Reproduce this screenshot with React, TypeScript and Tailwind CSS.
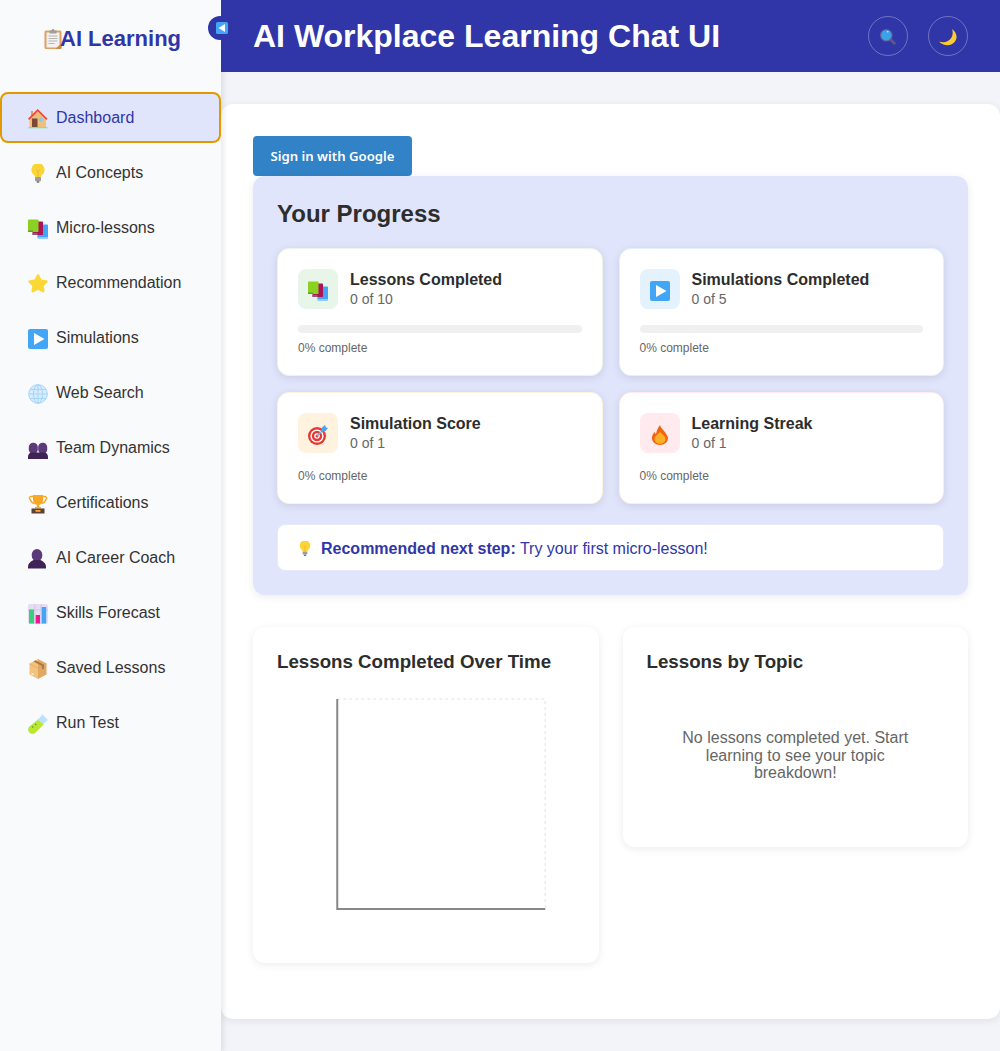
import React from "react";

type IconProps = { className?: string };

const Clipboard = ({ className }: IconProps) => (
  <svg viewBox="0 0 18 20" className={className}>
    <rect x="0.5" y="1.5" width="17" height="18.5" rx="1.5" fill="#e0a060" />
    <rect x="2.5" y="3.5" width="13" height="15" fill="#f3f2f0" />
    <path d="M4.5 7h9M4.5 9.5h9M4.5 12h9M4.5 14.5h6" stroke="#b5b5b5" strokeWidth="1" />
    <path d="M5.5 1.5h2l.8-1.5h1.4l.8 1.5h2v3h-7z" fill="#9e9e9e" />
    <path d="M11.5 20l6-6v4.5a1.5 1.5 0 0 1-1.5 1.5z" fill="#c98a4c" />
  </svg>
);
const House = ({ className }: IconProps) => (
  <svg viewBox="0 0 20 20" className={className}>
    <rect x="3" y="2" width="2" height="5" fill="#d9a066" />
    <path d="M1.500 10L9.700 1.500 18 10v8H1.500z" fill="#eec07c" />
    <path d="M0.600 10.300L9.700 1.200l9.300 9.100" fill="none" stroke="#f44336" strokeWidth="1.700" />
    <rect x="4" y="9.500" width="5.500" height="8.500" fill="#7a4a34" />
    <circle cx="13" cy="10.500" r="2.200" fill="#90c8ea" />
    <rect x="0.500" y="18" width="19" height="1.300" fill="#7fe59a" />
  </svg>
);
const Bulb = ({ className }: IconProps) => (
  <svg viewBox="0 1 20 20" className={className}>
    <path d="M10 0a6.700 6.700 0 0 0-4.200 11.800c.8.700 1.200 1.500 1.200 2.200h6c0-.7.400-1.500 1.200-2.200A6.700 6.700 0 0 0 10 0z" fill="#fbd535" />
    <path d="M8.500 6.500L10 9l1.500-2.500M10 9v5" stroke="#f4a836" strokeWidth="0.700" fill="none" />
    <rect x="7" y="14" width="6" height="4" rx="0.600" fill="#9e9e9e" />
    <rect x="8.500" y="18" width="3" height="1.800" rx="0.800" fill="#757575" />
  </svg>
);
const Books = ({ className }: IconProps) => (
  <svg viewBox="0 0 20 20" className={className}>
    <rect x="9.500" y="5.500" width="10.500" height="14" rx="0.800" fill="#42a5f5" />
    <rect x="10" y="18" width="10" height="1.500" fill="#90caf9" />
    <rect x="4.500" y="2.500" width="10.500" height="13.500" rx="0.800" fill="#ad1457" />
    <rect x="4.500" y="14" width="5" height="2" fill="#8e5a80" />
    <rect x="0" y="0.500" width="10.500" height="12.500" rx="0.800" fill="#8bd122" />
    <rect x="0" y="11.500" width="5" height="1.500" fill="#5f9f2a" />
  </svg>
);
const Star = ({ className }: IconProps) => (
  <svg viewBox="0 0 20 20" className={className}>
    <path d="M10 .3c.6 0 1 .4 1.300 1l2.100 4.300 4.800.7c1.400.2 1.900 1.400 1 2.300l-3.500 3.400.8 4.800c.2 1.300-.9 2-2 1.400L10 15.800l-4.500 2.400c-1.100.6-2.200-.1-2-1.400l.8-4.800L.8 8.600c-.9-.9-.4-2.100 1-2.300l4.800-.7 2.100-4.300c.3-.6.7-1 1.300-1z" fill="#fdd835" />
  </svg>
);
const Play = ({ className }: IconProps) => (
  <svg viewBox="0 0 20 20" className={className}>
    <rect width="20" height="20" rx="2" fill="#42a5f5" />
    <path d="M6 4l10.500 6L6 16z" fill="#fff" />
  </svg>
);
const Globe = ({ className }: IconProps) => (
  <svg viewBox="0 0 20 20" className={className}>
    <circle cx="10" cy="10" r="9.500" fill="#d8ecfd" />
    <g fill="none" stroke="#a5d5fb" strokeWidth="1">
      <circle cx="10" cy="10" r="9.300" />
      <ellipse cx="10" cy="10" rx="4.500" ry="9.300" />
      <path d="M10 .7v18.600M.7 10h18.600M2 5.500h16M2 14.500h16" />
    </g>
  </svg>
);
const Team = ({ className }: IconProps) => (
  <svg viewBox="0 0 20 20" className={className}>
    <rect x="0.800" y="3.800" width="9" height="11" rx="4.300" fill="#5a3a78" />
    <rect x="10.200" y="3.800" width="9" height="11" rx="4.300" fill="#5a3a78" />
    <path d="M0 20v-2C0 15.500 1.500 13.500 4 13.500h12c2.500 0 4 2 4 4.500v2z" fill="#3f2356" />
  </svg>
);
const Trophy = ({ className }: IconProps) => (
  <svg viewBox="0 0 20 20" className={className}>
    <path d="M5 2.500H3a1.800 1.800 0 0 0-.6 3.400C3.200 8 4 9 6.500 9.500M15 2.500h2a1.800 1.800 0 0 1 .6 3.400C16.800 8 16 9 13.500 9.500" fill="none" stroke="#f9a825" strokeWidth="1.500" />
    <path d="M5 1h10v4.500c0 3.300-2.200 5.500-5 5.500S5 8.800 5 5.500z" fill="#f9a825" />
    <rect x="8.800" y="10" width="2.400" height="4" fill="#f9a825" />
    <rect x="7" y="13" width="6" height="1.500" fill="#f9a825" />
    <rect x="3.500" y="14.500" width="13" height="5" fill="#5d4037" />
    <rect x="7.500" y="16" width="5" height="1.800" fill="#f9a825" />
  </svg>
);
const Person = ({ className }: IconProps) => (
  <svg viewBox="1 0 20 20" className={className}>
    <ellipse cx="10" cy="6.200" rx="5.300" ry="6.200" fill="#5a3a78" />
    <path d="M1 19.500v-1.500c0-4 3.500-6 5.500-7h7c2 1 5.500 3 5.500 7v1.500z" fill="#3f2356" />
  </svg>
);
const ChartIcon = ({ className }: IconProps) => (
  <svg viewBox="0 0 20 20" className={className}>
    <rect width="20" height="20" rx="2" fill="#e6ddf3" />
    <path d="M6.800 0v20M13 0v20M0 6h20" stroke="#d2c6e6" strokeWidth="1" />
    <rect x="1" y="5.500" width="5" height="14" fill="#38d07a" />
    <rect x="7.700" y="11" width="4.300" height="8.500" fill="#ec1a8e" />
    <rect x="13.700" y="3" width="4.500" height="16.500" fill="#42a5f5" />
  </svg>
);
const Box = ({ className }: IconProps) => (
  <svg viewBox="0 0 20 20" className={className}>
    <path d="M10 0l8.500 4.500v11L10 20z" fill="#e0a860" />
    <path d="M10 0L1.500 4.500v11L10 20z" fill="#f3c27c" />
    <path d="M1.500 4.500L10 9l8.500-4.500V5L10 9.500 1.500 5z" fill="#d6a15e" />
    <path d="M5.500 2.400L14.200 7l-.2 3.500 2-1V5.800L7.500 1.400z" fill="#a87448" />
    <rect x="3.500" y="14" width="2" height="2" fill="#f8e8d0" />
  </svg>
);
const Tube = ({ className }: IconProps) => (
  <svg viewBox="0 0 20 20" className={className}>
    <path d="M14 0L20 6 18.500 7 7.500 18.500a4 4 0 0 1-6-6L13 2.500z" fill="#bde0fb" />
    <path d="M10 6l5.500 4.500-8 8a4 4 0 0 1-6-6z" fill="#b9e82e" />
    <path d="M4 12.500l1.300 1M7 10l1.300 1" stroke="#5c9a1e" strokeWidth="1.200" />
  </svg>
);
const Target = ({ className }: IconProps) => (
  <svg viewBox="0 0 20 20" className={className}>
    <circle cx="9" cy="11" r="9" fill="#e53935" />
    <circle cx="9" cy="11" r="6.600" fill="#fff" />
    <circle cx="9" cy="11" r="5.200" fill="#e53935" />
    <circle cx="9" cy="11" r="2.800" fill="#fff" />
    <circle cx="9" cy="11" r="1.500" fill="#e53935" />
    <path d="M9 11l6-6" stroke="#64b5f6" strokeWidth="1.400" />
    <path d="M13 6l1-3.500L17 0l1 2.500L20 3l-2.500 3-3.500 1z" fill="#42a5f5" />
  </svg>
);
const Fire = ({ className }: IconProps) => (
  <svg viewBox="0 0 20 20" className={className}>
    <path d="M10 0c.5 3 3.300 4.500 5.200 7.500 1.300 2 2.800 4.300 2.800 5.500 0 4-3.500 7-8 7s-8-3-8-7c0-2.500 1.200-4.300 2.500-6 .3 1 .8 1.500 1.500 2C6.500 6 8 2.500 10 0z" fill="#f4640f" />
    <path d="M10 6.500c.8 2.500 5.500 4 5.500 7.500 0 3-2.500 4.800-5.500 4.800S4.500 17 4.500 14c0-3.500 4.700-5 5.500-7.500z" fill="#f9b027" />
  </svg>
);
const Search = ({ className }: IconProps) => (
  <svg viewBox="0 0 16 16" className={className}>
    <path d="M10 10l4.300 4.300" stroke="#5f5488" strokeWidth="3" strokeLinecap="round" />
    <circle cx="6.300" cy="6.300" r="6.300" fill="#6a5a90" />
    <circle cx="6.300" cy="6.300" r="5.200" fill="#38a3e8" />
    <circle cx="7.800" cy="2.800" r="0.800" fill="#e3f2fd" />
  </svg>
);
const Moon = ({ className }: IconProps) => (
  <svg viewBox="0 0 18 17" className={className}>
    <path d="M13 0C17.500 3 19 8.500 16 12.500 13 17 5 18 0 12.500 5 14.500 10 12.500 12.500 8.500 14 5.500 14 2.500 13 0z" fill="#fdcb2e" />
  </svg>
);

const nav: [string, React.FC<IconProps>][] = [
  ["Dashboard", House],
  ["AI Concepts", Bulb],
  ["Micro-lessons", Books],
  ["Recommendation", Star],
  ["Simulations", Play],
  ["Web Search", Globe],
  ["Team Dynamics", Team],
  ["Certifications", Trophy],
  ["AI Career Coach", Person],
  ["Skills Forecast", ChartIcon],
  ["Saved Lessons", Box],
  ["Run Test", Tube],
];

const Stat = ({
  title,
  sub,
  Icon,
  tint,
  border,
  bar,
}: {
  title: string;
  sub: string;
  Icon: React.FC<IconProps>;
  tint: string;
  border: string;
  bar?: boolean;
}) => (
  <div className={`rounded-xl border bg-white p-5 shadow-[0_2px_8px_rgba(0,0,0,0.1)] ${border}`}>
    <div className="mb-4 flex items-center gap-3">
      <div className={`flex h-10 w-10 items-center justify-center rounded-lg ${tint}`}>
        <Icon className="mt-[3px] h-5 w-5" />
      </div>
      <div>
        <div className="text-base font-bold leading-[18px] text-[#2d2d2d]">{title}</div>
        <div className="mt-[2px] text-sm leading-4 text-[#666666]">{sub}</div>
      </div>
    </div>
    {bar && <div className="mb-2 h-2 rounded bg-[#f0f0f0]" />}
    <div className="text-xs leading-[14px] text-[#666666]">0% complete</div>
  </div>
);

export default function App() {
  return (
    <div className="flex min-h-[1051px] bg-[#f3f4f9] font-['Liberation_Sans',Arial,sans-serif]">
      <aside className="relative w-[221px] shrink-0 bg-[#f9fafc] shadow-[2px_0_6px_rgba(0,0,0,0.1)]">
        <div className="flex h-[92px] items-start pl-[44px] pt-[25px]">
          <Clipboard className="mt-[4px] h-5 w-[18px] shrink-0" />
          <span className="-ml-[2px] text-[22px] font-bold leading-[28px] text-[#3036a7]">AI Learning</span>
        </div>
        <div className="absolute left-[208px] top-[16px] z-10 flex h-6 w-6 items-center justify-center rounded-full bg-[#3036a7] pl-[4px]">
          <svg viewBox="0 0 12 12" className="h-3 w-3 shrink-0">
            <rect width="12" height="12" rx="1.500" fill="#42a5f5" />
            <path d="M9 2v8L2.500 6z" fill="#fff" />
          </svg>
        </div>
        <nav>
          {nav.map(([label, Icon], i) => (
            <div
              key={label}
              className={`mb-1 flex h-[51px] items-center gap-2 rounded-lg border-2 pl-[26px] text-base ${
                i === 0 ? "border-[#e09a00] bg-[#e0e5fc] text-[#3036a7]" : "border-transparent text-[#333333]"
              }`}
            >
              <Icon className="mt-[3px] h-5 w-5 shrink-0" />
              <span>{label}</span>
            </div>
          ))}
        </nav>
      </aside>

      <div className="min-w-0 flex-1">
        <header className="relative flex h-[72px] items-center justify-between bg-[#3036a7] pl-8 pr-8">
          <h1 className="text-[32px] font-bold text-white">AI Workplace Learning Chat UI</h1>
          <div className="flex gap-5">
            <div className="flex h-10 w-10 items-center justify-center rounded-full border border-white/30">
              <Search className="mt-[2px] h-4 w-4" />
            </div>
            <div className="flex h-10 w-10 items-center justify-center rounded-full border border-white/30">
              <Moon className="mt-[2px] h-[17px] w-[18px]" />
            </div>
          </div>
        </header>

        <main className="pt-8">
          <div className="rounded-xl bg-white p-8 pb-14 shadow-[0_2px_8px_rgba(0,0,0,0.08)]">
            <button className="relative block h-10 w-[159px] rounded bg-[#3182c6] pt-px font-['Noto_Sans',sans-serif] text-[13.2px] font-semibold text-white">
              Sign in with Google
            </button>
            <section className="relative rounded-xl bg-[#e0e5fc] p-6 shadow-[0_2px_8px_rgba(0,0,0,0.08)]">
              <h2 className="mb-5 text-2xl font-bold leading-[28px] text-[#2d2d2d]">Your Progress</h2>
              <div className="grid grid-cols-2 gap-4">
                <Stat title="Lessons Completed" sub="0 of 10" Icon={Books} tint="bg-[#e8f5e9]" border="border-[#e8f5e9]" bar />
                <Stat title="Simulations Completed" sub="0 of 5" Icon={Play} tint="bg-[#e3f2fd]" border="border-[#e3f2fd]" bar />
                <Stat title="Simulation Score" sub="0 of 1" Icon={Target} tint="bg-[#fff3e0]" border="border-[#fff3e0]" />
                <Stat title="Learning Streak" sub="0 of 1" Icon={Fire} tint="bg-[#ffebee]" border="border-[#ffebee]" />
              </div>
              <div className="mt-5 flex h-[47px] items-center gap-2 rounded-lg border border-[#e6e9fd] bg-white pl-[19px] pt-[2px] text-base text-[#3036a7]">
                <Bulb className="h-4 w-4 shrink-0" />
                <span>
                  <strong className="font-bold">Recommended next step:</strong> Try your first micro-lesson!
                </span>
              </div>
            </section>

            <div className="mt-8 grid grid-cols-2 items-start gap-6">
              <div className="rounded-xl bg-white p-6 shadow-[0_2px_8px_rgba(0,0,0,0.08)]">
                <h3 className="mb-4 text-[18.720px] font-bold leading-[22px] text-[#2d2d2d]">Lessons Completed Over Time</h3>
                <svg className="block h-[250px] w-full" viewBox="0 0 297 250">
                  <path d="M60 10H268V220" fill="none" stroke="#ececec" strokeWidth="1.500" strokeDasharray="3 3" />
                  <path d="M60 10V220H268" fill="none" stroke="#888888" strokeWidth="2" />
                </svg>
              </div>
              <div className="rounded-xl bg-white p-6 shadow-[0_2px_8px_rgba(0,0,0,0.08)]">
                <h3 className="text-[18.720px] font-bold leading-[22px] text-[#2d2d2d]">Lessons by Topic</h3>
                <p className="px-8 pb-[41px] pt-[56px] text-center text-base leading-[17.500px] text-[#666666]">
                  No lessons completed yet. Start learning to see your topic breakdown!
                </p>
              </div>
            </div>
          </div>
        </main>
      </div>
    </div>
  );
}
